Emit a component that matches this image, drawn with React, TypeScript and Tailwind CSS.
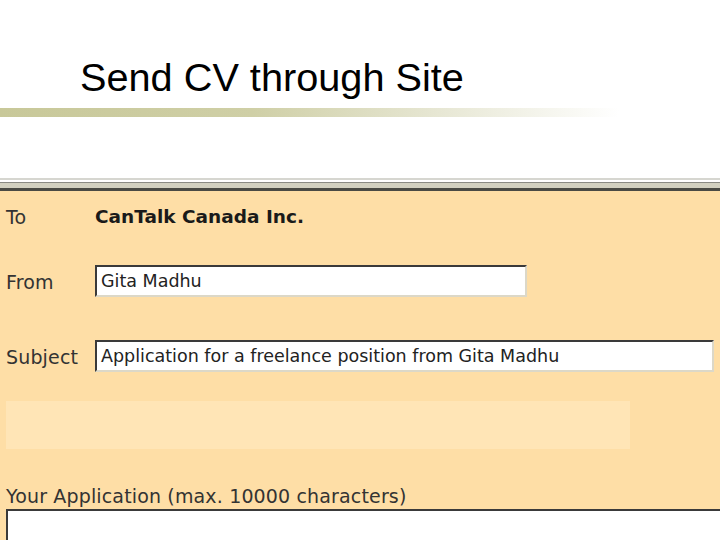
import React from "react";

const ui = { fontFamily: '"DejaVu Sans", Verdana, sans-serif' };

export default function App() {
  return (
    <div className="w-[720px] h-[540px] overflow-hidden bg-white flex flex-col">
      <div className="h-[108px] flex items-end pl-[80px] pb-[10px]">
        <h1
          className="text-[39.7px] leading-none text-black"
          style={{ fontFamily: '"Liberation Sans", Arial, sans-serif' }}
        >
          Send CV through Site
        </h1>
      </div>
      <div className="h-[9px] w-full bg-[linear-gradient(to_right,#c8c899_0%,#cfcfa6_35%,#e6e6d2_60%,#ffffff_86%)]" />
      <div className="h-[61px]" />
      {/* window frame lines */}
      <div className="h-[2px] bg-[#d6d6d0]" />
      <div className="h-[2px] bg-white" />
      <div className="h-[1px] bg-[#8a8a84]" />
      <div className="h-[5px] bg-[#d2d0c0]" />
      <div className="h-[3px] bg-[#4a4a44]" />
      <div className="flex-1 bg-[#fedea6] pl-[6px] flex flex-col" style={ui}>
        <div className="mt-[9px] h-[34px] flex items-center">
          <span className="w-[89px] text-[19px] tracking-[0.15px] text-[#333]">To</span>
          <span className="text-[18.5px] font-bold text-[#1a1a1a]">CanTalk Canada Inc.</span>
        </div>
        <div className="mt-[31px] flex items-center">
          <span className="w-[89px] text-[19px] tracking-[0.15px] text-[#333] pt-[2px]">From</span>
          <div className="w-[432px] h-[32px] bg-white border-2 border-t-[#3a3a3a] border-l-[#3a3a3a] border-b-[#dcd8c8] border-r-[#dcd8c8] flex items-center pl-[4px] text-[17.5px] text-[#222]">
            Gita Madhu
          </div>
        </div>
        <div className="mt-[43px] flex items-center">
          <span className="w-[89px] text-[19px] tracking-[0.15px] text-[#333] pt-[2px]">Subject</span>
          <div className="w-[619px] h-[32px] bg-white border-2 border-t-[#3a3a3a] border-l-[#3a3a3a] border-b-[#dcd8c8] border-r-[#dcd8c8] flex items-center pl-[4px] text-[17.5px] text-[#222] whitespace-nowrap">
            Application for a freelance position from Gita Madhu
          </div>
        </div>
        <div className="mt-[29px] w-[624px] h-[48px] bg-[#ffe5b6]" />
        <div className="mt-[37px] h-[20px] flex items-center text-[19px] tracking-[0.15px] text-[#333] whitespace-nowrap">
          Your Application (max. 10000 characters)
        </div>
        <div className="mt-[3px] w-[720px] flex-1 bg-white border-2 border-t-[#3a3a3a] border-l-[#3a3a3a] border-r-0 border-b-0" />
      </div>
    </div>
  );
}
